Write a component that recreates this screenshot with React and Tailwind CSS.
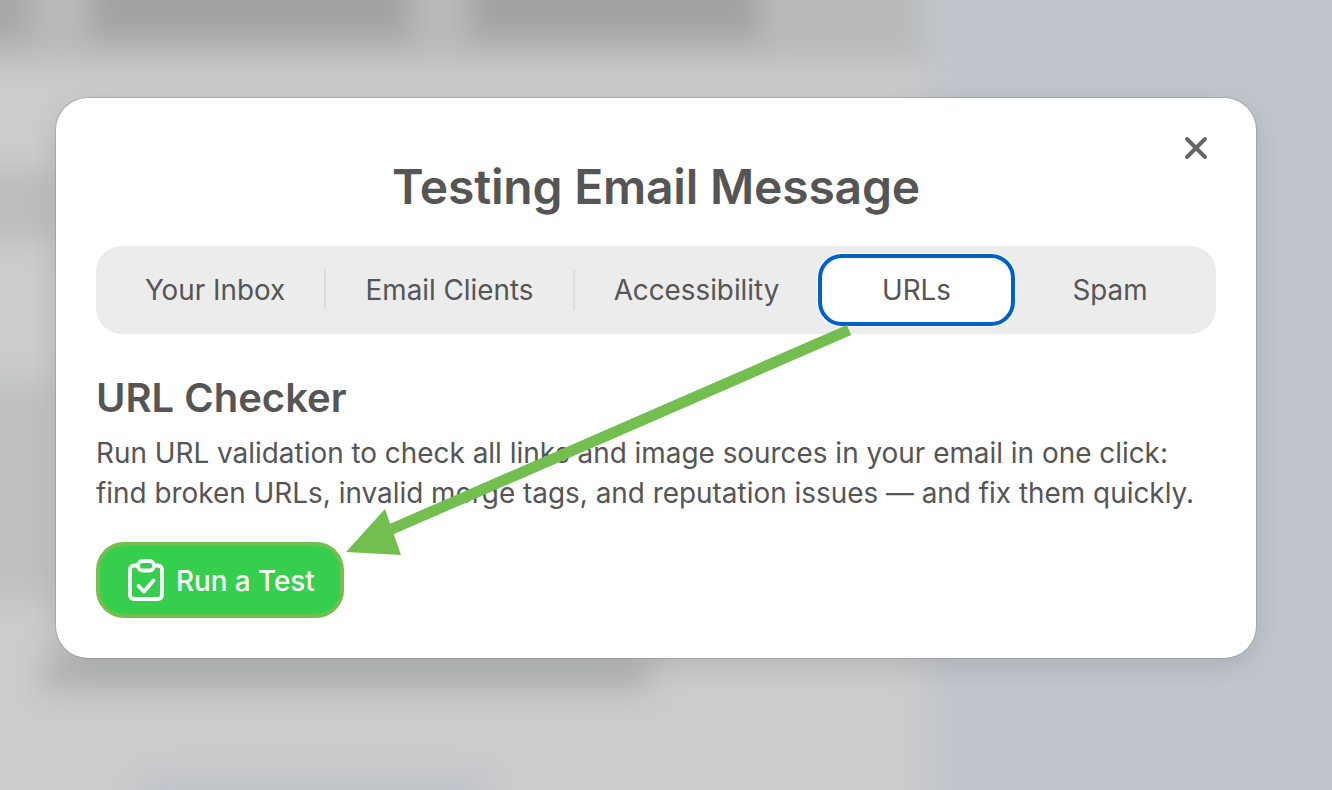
const tabs = [
  { label: 'Your Inbox', width: 'w-[220px]', divider: true },
  { label: 'Email Clients', width: 'w-[249px]', divider: true },
  { label: 'Accessibility', width: 'w-[243px]' },
  { label: 'URLs', width: 'w-[197px]', active: true },
  { label: 'Spam', width: 'w-[190px]' },
]

function CloseIcon() {
  return (
    <svg width="26" height="26" viewBox="0 0 26 26" fill="none" stroke="#666666" strokeWidth="4" strokeLinecap="round">
      <path d="M4 4l18 18M22 4L4 22" />
    </svg>
  )
}

function ClipboardIcon() {
  return (
    <svg width="38" height="42" viewBox="0 0 38 42" fill="none" stroke="#ffffff" strokeWidth="3.8" strokeLinecap="round" strokeLinejoin="round">
      <path d="M10 6.5H7a4 4 0 0 0-4 4V36a4 4 0 0 0 4 4h24a4 4 0 0 0 4-4V10.500a4 4 0 0 0-4-4h-3" />
      <rect x="11" y="2" width="16" height="9.500" rx="4.750" />
      <path d="M11.500 27l5.500 5.500 9.500-11" />
    </svg>
  )
}

// the page behind the modal, out of focus
function BlurredPage() {
  return (
    <div className="absolute inset-0 overflow-hidden bg-[#cccccc]">
      <div className="flex w-[1420px] h-[880px] -mt-[40px] -ml-[40px] blur-[14px]">
        <div className="w-[965px] flex flex-col">
          <div className="flex gap-[60px] h-[104px] bg-[#b9baba]">
            <div className="w-[70px] h-[80px] bg-[#a6a7a7]" />
            <div className="w-[320px] h-[80px] bg-[#a2a3a3]" />
            <div className="w-[290px] h-[80px] bg-[#a2a3a3]" />
          </div>
          <div className="w-[100px] h-[70px] mt-[106px] bg-[#bbbcbc]" />
          <div className="w-[100px] h-[220px] mt-[140px] bg-[#bfc0c0]" />
          <div className="w-[610px] h-[36px] mt-[56px] ml-[80px] bg-[#b3b4b4]" />
          <div className="w-[350px] h-[50px] mt-[80px] ml-[180px] bg-[#c0c5cb]" />
        </div>
        <div className="flex-1 bg-[#c1c6cc]" />
      </div>
    </div>
  )
}

export default function App() {
  return (
    <div className="relative w-[1332px] h-[790px] overflow-hidden font-['Inter',sans-serif] text-[#555555]">
      <BlurredPage />

      <div className="relative pt-[98px] pl-[56px]">
        <div className="relative w-[1200px] h-[560px] bg-white rounded-[32px] px-[40px] shadow-[0_0_0_1px_rgba(0,0,0,0.12),0_8px_30px_rgba(0,0,0,0.12)]">
          <button className="absolute top-[37px] right-[47px]">
            <CloseIcon />
          </button>

          <h1 className="pt-[58px] text-center text-[48px] leading-[62px] font-semibold tracking-[-0.2px]">Testing Email Message</h1>

          <div className="mt-[28px] flex items-center h-[88px] px-[10px] bg-[#ececec] rounded-[26px]">
            {tabs.map((tab) => (
              <div
                key={tab.label}
                className={`flex items-center justify-center pt-[1px] text-[27.800px] ${tab.width} ${
                  tab.divider ? 'h-[40px] border-r-2 border-[#dcdcdc]' : ''
                } ${tab.active ? 'h-[72px] bg-white rounded-[24px] border-[4px] border-[#0060c9] shadow-[0_0_0_1px_#ffffff]' : ''}`}
              >
                {tab.label}
              </div>
            ))}
          </div>

          <h2 className="mt-[39px] text-[40px] leading-[50px] font-semibold">URL Checker</h2>
          <p className="mt-[10px] text-[27.900px] leading-[40px]">
            Run URL validation to check all links and image sources in your email in one click:
            <br />
            find broken URLs, invalid merge tags, and reputation issues — and fix them quickly.
          </p>

          <button className="mt-[29px] flex items-center gap-[11px] w-[248px] h-[76px] pl-[27px] bg-[#36cf4d] rounded-[28px] border-[4px] border-[#72bf50] text-white text-[27.800px] font-medium">
            <ClipboardIcon />
            <span className="pt-[3px]">Run a Test</span>
          </button>
        </div>

        {/* annotation arrow */}
        <svg className="absolute left-0 top-0" width="1332" height="790" viewBox="0 0 1332 790" fill="none">
          <path d="M849 330L378 535" stroke="#72bf50" strokeWidth="11" />
          <path d="M346 552L385 509L401 555Z" fill="#72bf50" />
        </svg>
      </div>
    </div>
  )
}
